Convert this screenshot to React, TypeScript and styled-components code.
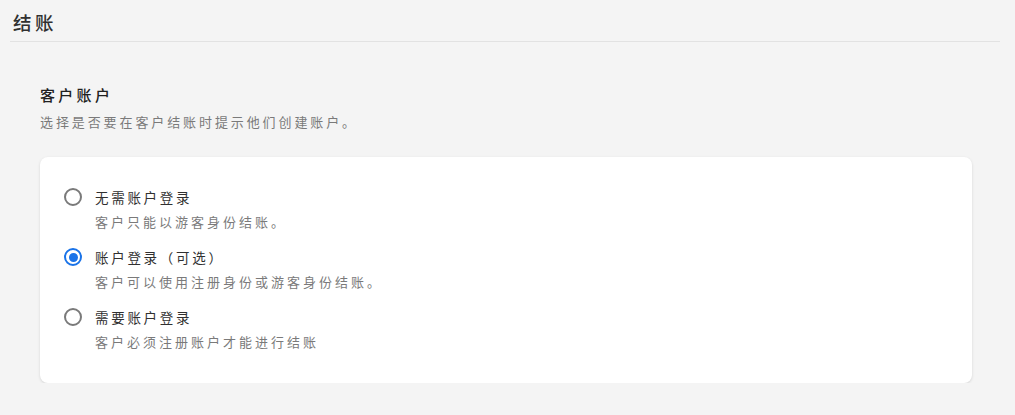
import { useState } from "react";
import styled, { createGlobalStyle } from "styled-components";

const GlobalStyle = createGlobalStyle`
  html, body {
    margin: 0;
    padding: 0;
    background: #f4f4f4;
    font-family: "Noto Sans CJK SC", "Noto Sans", sans-serif;
  }
`;

const Page = styled.div`
  padding: 0 15px 0 10px;
`;

const Header = styled.div`
  padding: 10px 0 7px 3px;
  border-bottom: 1px solid #e2e2e2;
`;

const PageTitle = styled.h1`
  margin: 0;
  font-size: 18.5px;
  line-height: 24px;
  font-weight: 500;
  letter-spacing: 3.5px;
  color: #303030;
`;

const Section = styled.section`
  padding: 43px 28px 0 30px;
`;

const SectionTitle = styled.h2`
  margin: 0;
  font-size: 15px;
  line-height: 20px;
  font-weight: 500;
  letter-spacing: 3.3px;
  color: #202020;
`;

const SectionSubtitle = styled.p`
  margin: 7px 0 0;
  font-size: 13px;
  line-height: 20px;
  letter-spacing: 2.9px;
  color: #7a7a7a;
`;

const Card = styled.div`
  margin-top: 25px;
  padding: 28px 24px;
  background: #fff;
  border-radius: 8px;
  box-shadow: 0 1px 3px rgba(0, 0, 0, 0.13);
  display: flex;
  flex-direction: column;
  gap: 10px;
`;

const Option = styled.label`
  display: grid;
  grid-template-columns: 18px 1fr;
  column-gap: 13px;
  cursor: pointer;
`;

const Radio = styled.span<{ $checked: boolean }>`
  box-sizing: border-box;
  width: 18px;
  height: 18px;
  margin-top: 3px;
  border-radius: 50%;
  border: 2px solid ${({ $checked }) => ($checked ? "#1a73e8" : "#7a7a7a")};
  display: flex;
  align-items: center;
  justify-content: center;

  &::after {
    content: "";
    width: 9px;
    height: 9px;
    border-radius: 50%;
    background: #1a73e8;
    display: ${({ $checked }) => ($checked ? "block" : "none")};
  }
`;

const OptionLabel = styled.span`
  font-size: 13.5px;
  line-height: 24px;
  letter-spacing: 2.7px;
  color: #303030;
`;

const OptionDesc = styled.span`
  grid-column: 2;
  font-size: 13px;
  line-height: 26px;
  letter-spacing: 3px;
  color: #7a7a7a;
`;

const options = [
  { id: "none", label: "无需账户登录", desc: "客户只能以游客身份结账。" },
  { id: "optional", label: "账户登录（可选）", desc: "客户可以使用注册身份或游客身份结账。" },
  { id: "required", label: "需要账户登录", desc: "客户必须注册账户才能进行结账" },
];

export default function App() {
  const [selected, setSelected] = useState("optional");

  return (
    <>
      <GlobalStyle />
      <Page>
        <Header>
          <PageTitle>结账</PageTitle>
        </Header>
        <Section>
          <SectionTitle>客户账户</SectionTitle>
          <SectionSubtitle>选择是否要在客户结账时提示他们创建账户。</SectionSubtitle>
          <Card>
            {options.map((o) => (
              <Option key={o.id} onClick={() => setSelected(o.id)}>
                <Radio $checked={selected === o.id} />
                <OptionLabel>{o.label}</OptionLabel>
                <OptionDesc>{o.desc}</OptionDesc>
              </Option>
            ))}
          </Card>
        </Section>
      </Page>
    </>
  );
}
